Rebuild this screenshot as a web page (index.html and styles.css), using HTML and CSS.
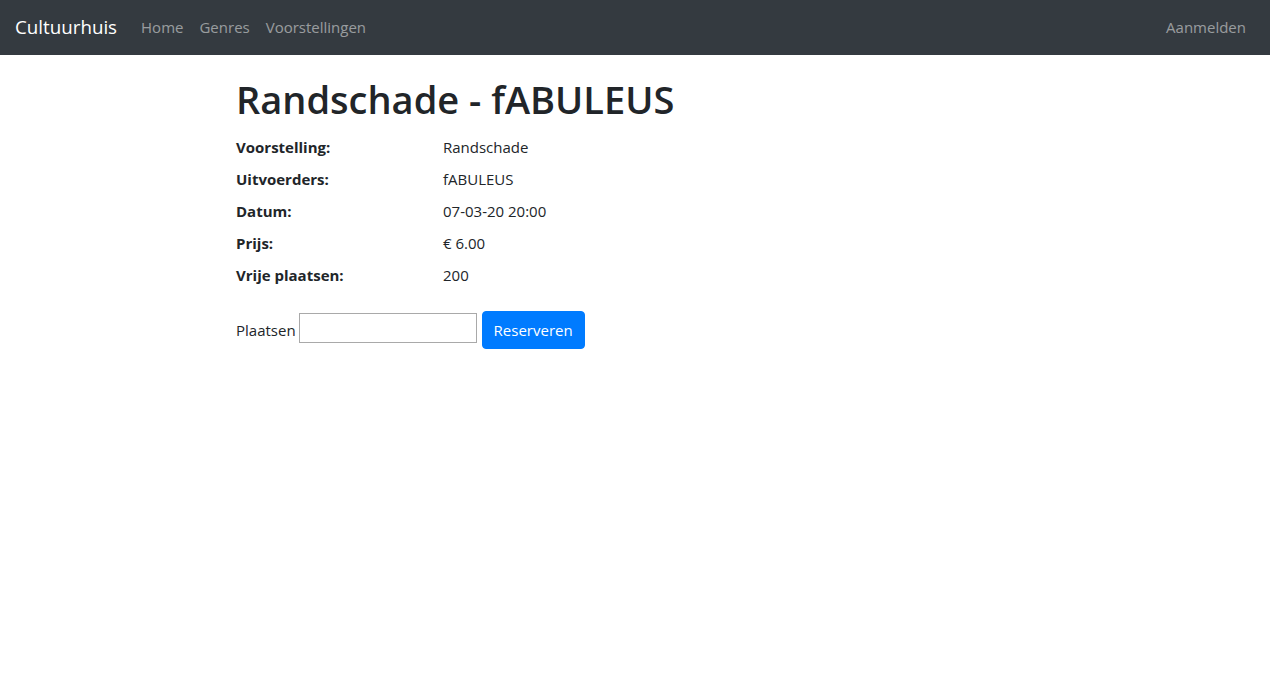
FILE: index.html
```html
<!DOCTYPE html>
<html lang="nl">
<head>
<meta charset="utf-8">
<title>Randschade - fABULEUS</title>
<link rel="stylesheet" href="styles.css">
</head>
<body>
<nav class="navbar">
  <a class="brand" href="#">Cultuurhuis</a>
  <ul class="nav-links">
    <li><a href="#">Home</a></li>
    <li><a href="#">Genres</a></li>
    <li><a href="#">Voorstellingen</a></li>
  </ul>
  <ul class="nav-links nav-right">
    <li><a href="#">Aanmelden</a></li>
  </ul>
</nav>
<main class="container">
  <h1 class="title">Randschade - fABULEUS</h1>
  <dl class="details">
    <dt>Voorstelling:</dt><dd>Randschade</dd>
    <dt>Uitvoerders:</dt><dd>fABULEUS</dd>
    <dt>Datum:</dt><dd>07-03-20 20:00</dd>
    <dt>Prijs:</dt><dd>€ 6.00</dd>
    <dt>Vrije plaatsen:</dt><dd>200</dd>
  </dl>
  <form class="reserve">
    <label for="plaatsen">Plaatsen</label>
    <input id="plaatsen" class="seats" type="text">
    <button type="button" class="btn">Reserveren</button>
  </form>
</main>
</body>
</html>
```
FILE: styles.css
```css
* { box-sizing: border-box; }
html, body { margin: 0; padding: 0; }
body {
  font-family: "Open Sans", "Noto Sans", "Liberation Sans", sans-serif;
  font-size: 15px;
  line-height: 24px;
  color: #212529;
  background: #fff;
}
a { text-decoration: none; }

.navbar {
  display: flex;
  align-items: center;
  height: 55px;
  padding: 0 16px 1px;
  background: #343a40;
}
.brand {
  color: #fff;
  font-size: 18.75px;
  line-height: 30px;
  margin-left: -1px;
  margin-right: 16px;
}
.nav-links {
  display: flex;
  list-style: none;
  margin: 0;
  padding: 0;
}
.nav-links a {
  display: block;
  padding: 8px;
  color: rgba(255,255,255,.5);
  line-height: 24px;
}
.nav-right { margin-left: auto; }

.container {
  width: 798px;
  margin: 0 auto;
  padding-top: 20px;
}
.title {
  font-size: 38px;
  font-weight: 600;
  line-height: 48px;
  margin: 0 0 12px;
}
.details {
  display: grid;
  grid-template-columns: 207px 1fr;
  margin: 0 0 16px;
}
.details dt {
  font-weight: 700;
  margin: 0 0 8px;
}
.details dd {
  margin: 0 0 8px;
}
.reserve {
  display: flex;
  align-items: center;
}
.reserve label { margin-right: 3px; }
.seats {
  width: 178px;
  height: 30px;
  border: 1px solid #a9a9a9;
  padding: 1px 2px;
  font: inherit;
  margin: 0 5px 4px 0;
}
.btn {
  font: inherit;
  width: 103px;
  color: #fff;
  background: #007bff;
  border: 1px solid #007bff;
  border-radius: 4px;
  padding: 6px 0;
  line-height: 24px;
  text-align: center;
  cursor: pointer;
}
```
